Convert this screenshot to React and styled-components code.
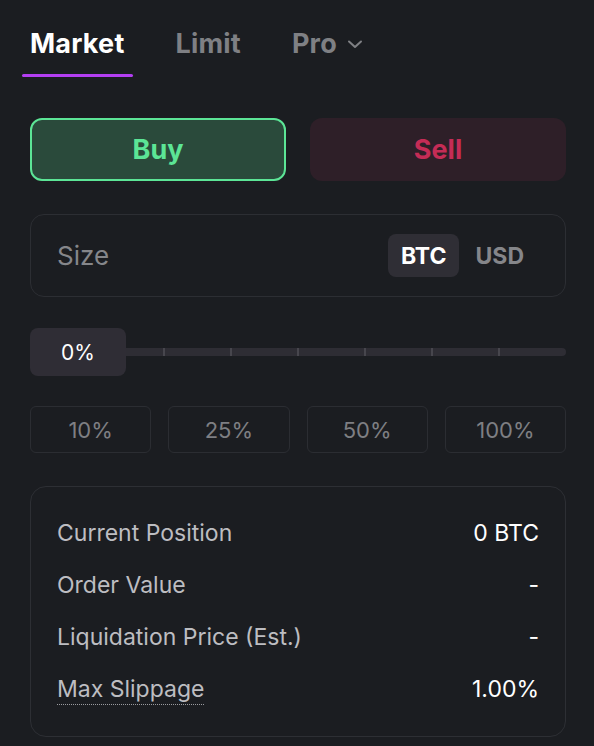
import React from "react";
import styled, { createGlobalStyle } from "styled-components";

const GlobalStyle = createGlobalStyle`
    html, body {
        margin: 0;
        padding: 0;
        background: #1b1d21;
    }
    body {
        font-family: Inter, "Noto Sans", sans-serif;
        color: #ffffff;
    }
`;

const Panel = styled.div`
    width: 536px;
    padding: 28px 28px 12px 30px;
    display: flex;
    flex-direction: column;
`;

const TabBar = styled.div`
    display: flex;
    gap: 34px;
    margin-left: -8px;
`;

const Tab = styled.div`
    position: relative;
    display: flex;
    align-items: center;
    gap: 10px;
    padding: 0 9px 17px 8px;
    font-size: 27px;
    line-height: 32px;
    font-weight: 700;
    letter-spacing: 0.2px;
    color: ${(p) => (p.active ? "#ffffff" : "#7f8084")};

    &::after {
        content: "";
        display: ${(p) => (p.active ? "block" : "none")};
        position: absolute;
        left: 0;
        right: 0;
        bottom: 0;
        height: 3px;
        border-radius: 2px;
        background: #b33ef2;
    }
`;

const SideRow = styled.div`
    display: grid;
    grid-template-columns: 1fr 1fr;
    gap: 24px;
    margin-top: 41px;
`;

const SideButton = styled.button`
    height: 63px;
    border-radius: 12px;
    font-family: inherit;
    font-size: 27px;
    font-weight: 700;
    border: 2px solid ${(p) => (p.active ? "#5ce596" : "transparent")};
    background: ${(p) => (p.active ? "#2a4a3b" : "#2e1f28")};
    color: ${(p) => (p.active ? "#5ce596" : "#c52c56")};
`;

const SizeBox = styled.div`
    margin-top: 33px;
    height: 83px;
    box-sizing: border-box;
    border: 1.5px solid #2c2e33;
    border-radius: 14px;
    display: flex;
    align-items: center;
    padding: 0 26px;
`;

const SizeLabel = styled.span`
    flex: 1;
    font-size: 26px;
    color: #85868a;
`;

const UnitSwitch = styled.div`
    display: flex;
    gap: 3px;
    margin-right: 2px;
`;

const Unit = styled.span`
    height: 43px;
    padding: 0 13px;
    display: flex;
    align-items: center;
    border-radius: 8px;
    font-size: 23px;
    font-weight: 700;
    background: ${(p) => (p.active ? "#2f2e35" : "transparent")};
    color: ${(p) => (p.active ? "#ffffff" : "#85868a")};
`;

const Slider = styled.div`
    position: relative;
    margin-top: 31px;
    height: 48px;
    display: flex;
    align-items: center;
`;

const Track = styled.div`
    flex: 1;
    height: 8px;
    border-radius: 4px;
    background: #2e2d34;
    display: flex;
    justify-content: space-between;
    padding: 0 66px 0 133px;
`;

const Tick = styled.span`
    width: 2px;
    height: 8px;
    background: #47464d;
`;

const Thumb = styled.div`
    position: absolute;
    left: 0;
    top: 0;
    width: 96px;
    height: 48px;
    border-radius: 8px;
    background: #2f2d35;
    display: flex;
    align-items: center;
    justify-content: center;
    font-size: 21px;
    color: #ffffff;
`;

const PresetRow = styled.div`
    margin-top: 30px;
    display: grid;
    grid-template-columns: repeat(4, 1fr);
    gap: 17px;
`;

const Preset = styled.div`
    height: 47px;
    box-sizing: border-box;
    border: 1.5px solid #2b2d32;
    border-radius: 6px;
    display: flex;
    align-items: center;
    justify-content: center;
    font-size: 22px;
    color: #7e7f83;
`;

const InfoBox = styled.div`
    margin-top: 33px;
    border: 1.5px solid #2d2f34;
    border-radius: 16px;
    padding: 29px 26px 30px 26px;
    display: flex;
    flex-direction: column;
    gap: 18px;
`;

const InfoRow = styled.div`
    display: flex;
    justify-content: space-between;
    align-items: center;
    height: 34px;
    font-size: 23px;
`;

const InfoLabel = styled.span`
    color: #bdbdc1;
    ${(p) => p.dotted && "border-bottom: 1.5px dotted #9a9b9f; line-height: 30px;"}
`;

const InfoValue = styled.span`
    color: #ffffff;
`;

const Chevron = () => (
    <svg width="16" height="10" viewBox="0 0 16 10" fill="none">
        <path d="M2 2.5l6 5.5 6-5.5" stroke="#7f8084" strokeWidth="2" strokeLinecap="round" strokeLinejoin="round" />
    </svg>
);

const rows = [
    { label: "Current Position", value: "0 BTC" },
    { label: "Order Value", value: "-" },
    { label: "Liquidation Price (Est.)", value: "-" },
    { label: "Max Slippage", value: "1.00%", dotted: true }
];

export default function App() {
    return (
        <>
            <GlobalStyle />
            <Panel>
                <TabBar>
                    <Tab active>Market</Tab>
                    <Tab>Limit</Tab>
                    <Tab>
                        Pro
                        <Chevron />
                    </Tab>
                </TabBar>

                <SideRow>
                    <SideButton active>Buy</SideButton>
                    <SideButton>Sell</SideButton>
                </SideRow>

                <SizeBox>
                    <SizeLabel>Size</SizeLabel>
                    <UnitSwitch>
                        <Unit active>BTC</Unit>
                        <Unit>USD</Unit>
                    </UnitSwitch>
                </SizeBox>

                <Slider>
                    <Track>
                        {[0, 1, 2, 3, 4, 5].map((i) => (
                            <Tick key={i} />
                        ))}
                    </Track>
                    <Thumb>0%</Thumb>
                </Slider>

                <PresetRow>
                    {["10%", "25%", "50%", "100%"].map((p) => (
                        <Preset key={p}>{p}</Preset>
                    ))}
                </PresetRow>

                <InfoBox>
                    {rows.map((r) => (
                        <InfoRow key={r.label}>
                            <InfoLabel dotted={r.dotted}>{r.label}</InfoLabel>
                            <InfoValue>{r.value}</InfoValue>
                        </InfoRow>
                    ))}
                </InfoBox>
            </Panel>
        </>
    );
}
